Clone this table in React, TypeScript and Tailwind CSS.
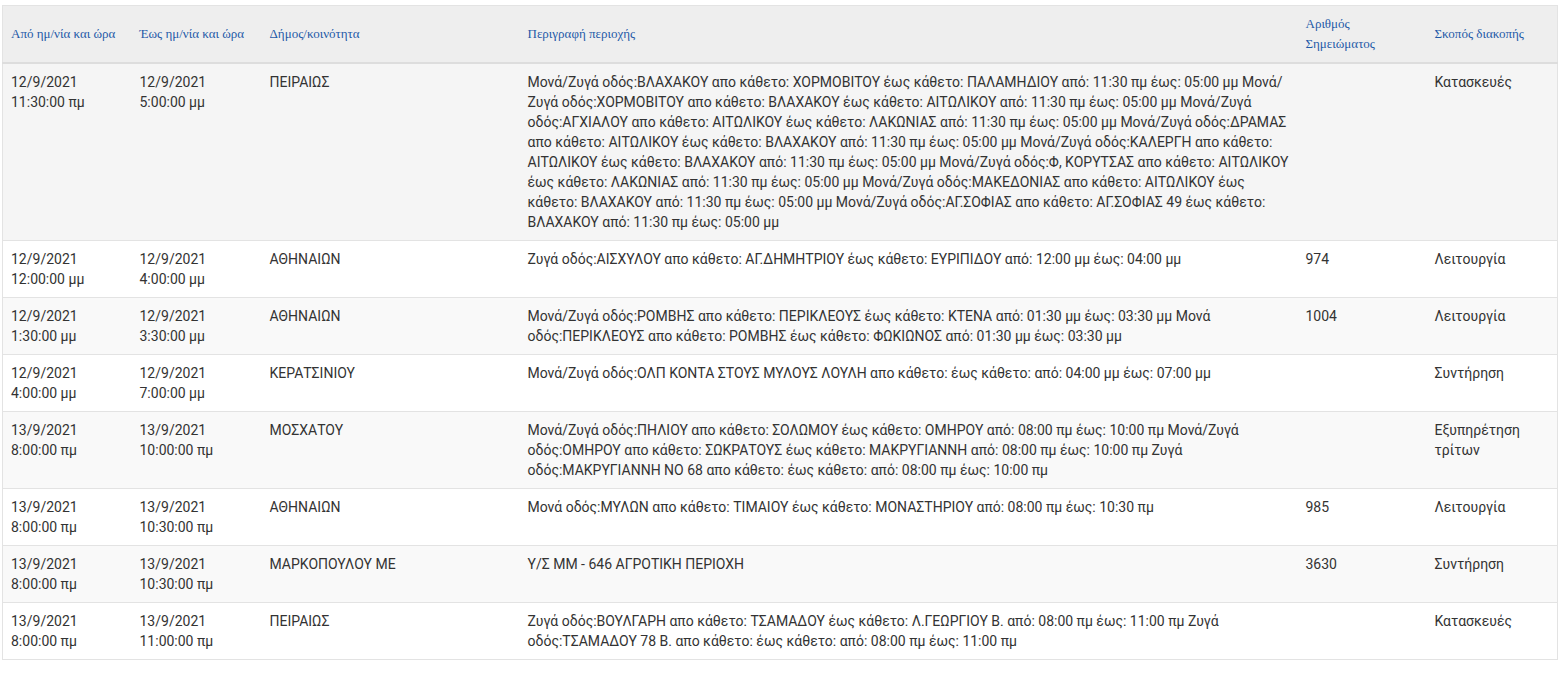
import React from "react";

type Row = {
  from: [string, string];
  to: [string, string];
  dimos: string;
  desc: string;
  num: string;
  skopos: string;
};

const rows: Row[] = [
  {
    from: ["12/9/2021", "11:30:00 πμ"],
    to: ["12/9/2021", "5:00:00 μμ"],
    dimos: "ΠΕΙΡΑΙΩΣ",
    desc: "Μονά/Ζυγά οδός:ΒΛΑΧΑΚΟΥ απο κάθετο: ΧΟΡΜΟΒΙΤΟΥ έως κάθετο: ΠΑΛΑΜΗΔΙΟΥ από: 11:30 πμ έως: 05:00 μμ Μονά/Ζυγά οδός:ΧΟΡΜΟΒΙΤΟΥ απο κάθετο: ΒΛΑΧΑΚΟΥ έως κάθετο: ΑΙΤΩΛΙΚΟΥ από: 11:30 πμ έως: 05:00 μμ Μονά/Ζυγά οδός:ΑΓΧΙΑΛΟΥ απο κάθετο: ΑΙΤΩΛΙΚΟΥ έως κάθετο: ΛΑΚΩΝΙΑΣ από: 11:30 πμ έως: 05:00 μμ Μονά/Ζυγά οδός:ΔΡΑΜΑΣ απο κάθετο: ΑΙΤΩΛΙΚΟΥ έως κάθετο: ΒΛΑΧΑΚΟΥ από: 11:30 πμ έως: 05:00 μμ Μονά/Ζυγά οδός:ΚΑΛΕΡΓΗ απο κάθετο: ΑΙΤΩΛΙΚΟΥ έως κάθετο: ΒΛΑΧΑΚΟΥ από: 11:30 πμ έως: 05:00 μμ Μονά/Ζυγά οδός:Φ, ΚΟΡΥΤΣΑΣ απο κάθετο: ΑΙΤΩΛΙΚΟΥ έως κάθετο: ΛΑΚΩΝΙΑΣ από: 11:30 πμ έως: 05:00 μμ Μονά/Ζυγά οδός:ΜΑΚΕΔΟΝΙΑΣ απο κάθετο: ΑΙΤΩΛΙΚΟΥ έως κάθετο: ΒΛΑΧΑΚΟΥ από: 11:30 πμ έως: 05:00 μμ Μονά/Ζυγά οδός:ΑΓ.ΣΟΦΙΑΣ απο κάθετο: ΑΓ.ΣΟΦΙΑΣ 49 έως κάθετο: ΒΛΑΧΑΚΟΥ από: 11:30 πμ έως: 05:00 μμ",
    num: "",
    skopos: "Κατασκευές",
  },
  {
    from: ["12/9/2021", "12:00:00 μμ"],
    to: ["12/9/2021", "4:00:00 μμ"],
    dimos: "ΑΘΗΝΑΙΩΝ",
    desc: "Ζυγά οδός:ΑΙΣΧΥΛΟΥ απο κάθετο: ΑΓ.ΔΗΜΗΤΡΙΟΥ έως κάθετο: ΕΥΡΙΠΙΔΟΥ από: 12:00 μμ έως: 04:00 μμ",
    num: "974",
    skopos: "Λειτουργία",
  },
  {
    from: ["12/9/2021", "1:30:00 μμ"],
    to: ["12/9/2021", "3:30:00 μμ"],
    dimos: "ΑΘΗΝΑΙΩΝ",
    desc: "Μονά/Ζυγά οδός:ΡΟΜΒΗΣ απο κάθετο: ΠΕΡΙΚΛΕΟΥΣ έως κάθετο: ΚΤΕΝΑ από: 01:30 μμ έως: 03:30 μμ Μονά οδός:ΠΕΡΙΚΛΕΟΥΣ απο κάθετο: ΡΟΜΒΗΣ έως κάθετο: ΦΩΚΙΩΝΟΣ από: 01:30 μμ έως: 03:30 μμ",
    num: "1004",
    skopos: "Λειτουργία",
  },
  {
    from: ["12/9/2021", "4:00:00 μμ"],
    to: ["12/9/2021", "7:00:00 μμ"],
    dimos: "ΚΕΡΑΤΣΙΝΙΟΥ",
    desc: "Μονά/Ζυγά οδός:ΟΛΠ ΚΟΝΤΑ ΣΤΟΥΣ ΜΥΛΟΥΣ ΛΟΥΛΗ απο κάθετο: έως κάθετο: από: 04:00 μμ έως: 07:00 μμ",
    num: "",
    skopos: "Συντήρηση",
  },
  {
    from: ["13/9/2021", "8:00:00 πμ"],
    to: ["13/9/2021", "10:00:00 πμ"],
    dimos: "ΜΟΣΧΑΤΟΥ",
    desc: "Μονά/Ζυγά οδός:ΠΗΛΙΟΥ απο κάθετο: ΣΟΛΩΜΟΥ έως κάθετο: ΟΜΗΡΟΥ από: 08:00 πμ έως: 10:00 πμ Μονά/Ζυγά οδός:ΟΜΗΡΟΥ απο κάθετο: ΣΩΚΡΑΤΟΥΣ έως κάθετο: ΜΑΚΡΥΓΙΑΝΝΗ από: 08:00 πμ έως: 10:00 πμ Ζυγά οδός:ΜΑΚΡΥΓΙΑΝΝΗ ΝΟ 68 απο κάθετο: έως κάθετο: από: 08:00 πμ έως: 10:00 πμ",
    num: "",
    skopos: "Εξυπηρέτηση τρίτων",
  },
  {
    from: ["13/9/2021", "8:00:00 πμ"],
    to: ["13/9/2021", "10:30:00 πμ"],
    dimos: "ΑΘΗΝΑΙΩΝ",
    desc: "Μονά οδός:ΜΥΛΩΝ απο κάθετο: ΤΙΜΑΙΟΥ έως κάθετο: ΜΟΝΑΣΤΗΡΙΟΥ από: 08:00 πμ έως: 10:30 πμ",
    num: "985",
    skopos: "Λειτουργία",
  },
  {
    from: ["13/9/2021", "8:00:00 πμ"],
    to: ["13/9/2021", "10:30:00 πμ"],
    dimos: "ΜΑΡΚΟΠΟΥΛΟΥ ΜΕ",
    desc: "Υ/Σ ΜΜ - 646 ΑΓΡΟΤΙΚΗ ΠΕΡΙΟΧΗ",
    num: "3630",
    skopos: "Συντήρηση",
  },
  {
    from: ["13/9/2021", "8:00:00 πμ"],
    to: ["13/9/2021", "11:00:00 πμ"],
    dimos: "ΠΕΙΡΑΙΩΣ",
    desc: "Ζυγά οδός:ΒΟΥΛΓΑΡΗ απο κάθετο: ΤΣΑΜΑΔΟΥ έως κάθετο: Λ.ΓΕΩΡΓΙΟΥ Β. από: 08:00 πμ έως: 11:00 πμ Ζυγά οδός:ΤΣΑΜΑΔΟΥ 78 Β. απο κάθετο: έως κάθετο: από: 08:00 πμ έως: 11:00 πμ",
    num: "",
    skopos: "Κατασκευές",
  },
];

function App() {
  return (
    <div className="min-h-screen bg-white pt-[5px] pl-[2px] pr-2">
      <table className="w-full table-fixed border-collapse border border-[#e3e3e3] font-['Roboto',sans-serif] text-[14px] leading-5 text-[#333]">
        <colgroup>
          <col className="w-[129px]" />
          <col className="w-[130px]" />
          <col className="w-[258px]" />
          <col className="w-[778px]" />
          <col className="w-[129px]" />
          <col />
        </colgroup>
        <thead>
          <tr className="bg-[#eeeeee] border-b-2 border-[#dddddd] text-left align-middle font-['Liberation_Serif',serif] text-[13px] font-normal text-[#1f5aa8]">
            <th className="px-2 py-2 font-normal">Από ημ/νία και ώρα</th>
            <th className="px-2 py-2 font-normal">Έως ημ/νία και ώρα</th>
            <th className="px-2 py-2 font-normal">Δήμος/κοινότητα</th>
            <th className="px-2 py-2 font-normal">Περιγραφή περιοχής</th>
            <th className="px-2 py-2 font-normal">
              Αριθμός
              <br />
              Σημειώματος
            </th>
            <th className="px-2 py-2 font-normal">Σκοπός διακοπής</th>
          </tr>
        </thead>
        <tbody>
          {rows.map((r, i) => (
            <tr
              key={i}
              className={`border-t border-[#e3e3e3] align-top ${
                i === 0 ? "bg-[#f5f5f5]" : i % 2 === 0 ? "bg-[#f9f9f9]" : "bg-white"
              }`}
            >
              <td className="px-2 py-2">
                {r.from[0]}
                <br />
                {r.from[1]}
              </td>
              <td className="px-2 py-2">
                {r.to[0]}
                <br />
                {r.to[1]}
              </td>
              <td className="px-2 py-2">{r.dimos}</td>
              <td className="px-2 py-2">{r.desc}</td>
              <td className="px-2 py-2">{r.num}</td>
              <td className="px-2 py-2">{r.skopos}</td>
            </tr>
          ))}
        </tbody>
      </table>
    </div>
  );
}

export default App;
